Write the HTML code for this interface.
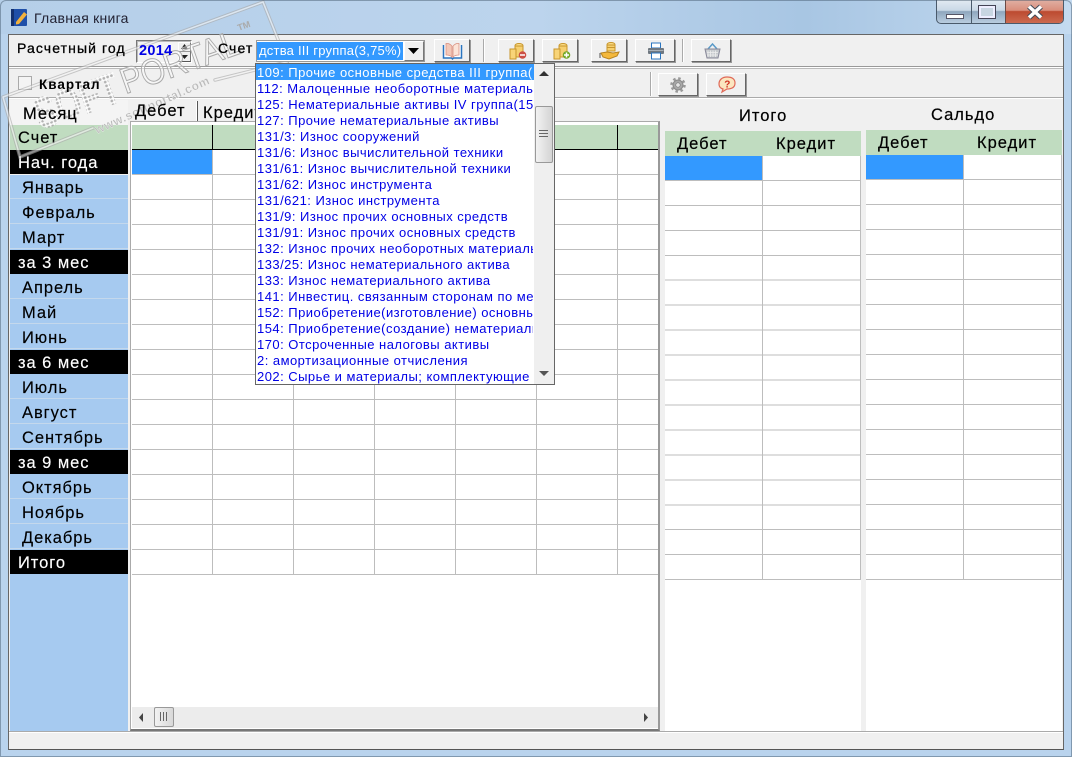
<!DOCTYPE html>
<html><head><meta charset="utf-8"><style>
html,body{margin:0;padding:0}
body{width:1072px;height:757px;overflow:hidden;position:relative;font-family:"Liberation Sans",sans-serif;background:#b9d3ed;color:#000}
.a{position:absolute;box-sizing:border-box}
.t{position:absolute;z-index:5;white-space:nowrap;font-size:16.5px;letter-spacing:1px;line-height:18px;-webkit-text-stroke:.2px #000}
.btn{position:absolute;top:39px;height:23px;box-sizing:border-box;background:#f0f0f0;border:1px solid;border-color:#fff #666 #666 #fff;box-shadow:1px 1px 0 #999}
.sep{position:absolute;width:1px;background:#aaa;box-shadow:1px 0 0 #fff}
.m{position:absolute;left:10px;width:118px;height:24px;font-size:16.5px;letter-spacing:.95px;line-height:27px;padding-left:12px;box-sizing:border-box;background:#a6caf0;border-bottom:1px solid #c4d8ec;white-space:nowrap;-webkit-text-stroke:.15px}
.k{background:#000;color:#fff;padding-left:8px;border:0}
.l{position:absolute;left:257px;white-space:nowrap;font-size:13px;letter-spacing:.47px;line-height:17px;height:17px;color:#0000e6;width:276px;overflow:hidden}
svg{position:absolute;overflow:visible}
</style></head><body>
<div class="a" style="left:0;top:0;width:1072px;height:34px;background:linear-gradient(90deg,#b5cfe9,#bcd4ed 50%,#a8c6e3 75%,#c4daf0)"></div>
<svg style="left:11px;top:8px" width="18" height="19" viewBox="0 0 18 19"><rect x="0" y="1" width="16" height="17" rx="1" fill="#1f4fa8"/><rect x="0" y="1" width="3" height="17" fill="#13306e"/><path d="M5 14 L13 4 L16 6.500 L8 16 L5 16.500 Z" fill="#f2b13c"/></svg>
<div class="t" style="left:34px;top:9px;font-size:14px;letter-spacing:.25px;color:#223;-webkit-text-stroke:0">Главная книга</div>

<div class="a" style="left:936px;top:0;width:128px;height:24px;border:1px solid #4a5a6b;border-top:0;border-radius:0 0 5px 5px;background:linear-gradient(#e2eaf2 0,#c9d8e6 45%,#8ea6bd 50%,#b9cde0);overflow:hidden">
<div class="a" style="left:34px;top:0;width:1px;height:23px;background:#4a5a6b"></div>
<div class="a" style="left:68px;top:0;width:1px;height:23px;background:#6b4a45"></div>
<div class="a" style="left:69px;top:0;width:58px;height:23px;background:linear-gradient(#e0b0a4 0,#d98e7c 45%,#bc4a30 50%,#cc6a50)"></div>
<div class="a" style="left:9px;top:14px;width:18px;height:5px;background:#fff;border:1px solid #556"></div>
<div class="a" style="left:41px;top:5px;width:18px;height:14px;border:1px solid #445;background:#c8d6e2;box-shadow:inset 0 0 0 2px #eef"></div>
<svg style="left:88px;top:5px" width="20" height="14"><path d="M4 1.500 L16 12.500 M16 1.500 L4 12.500" stroke="#3d4a58" stroke-width="5.500"/><path d="M4 1.500 L16 12.500 M16 1.500 L4 12.500" stroke="#fff" stroke-width="3.500"/></svg>
</div>

<!-- client -->
<div class="a" style="left:8px;top:34px;width:1056px;height:716px;background:#f0f0f0;border:1px solid #666;border-bottom-color:#555"></div>
<div class="a" style="left:9px;top:66px;width:1054px;height:3px;border-top:1px solid #999;border-bottom:1px solid #bbb;background:#fff"></div>
<div class="a" style="left:9px;top:97px;width:1054px;height:2px;border-top:1px solid #aaa;background:#fff"></div>

<div class="t" style="left:17px;top:39px;font-size:14px;letter-spacing:1.1px;-webkit-text-stroke:.3px #000">Расчетный год</div>
<div class="a" style="left:136px;top:40px;width:56px;height:23px;border:1px solid;border-color:#777 #fff #fff #777;box-shadow:inset 1px 1px 0 #bbb;background:#f4f4f4"></div>
<div class="t" style="left:139px;top:42px;font-size:14.500px;letter-spacing:.3px;font-weight:bold;color:#0000e6;-webkit-text-stroke:0">2014</div>
<div class="a" style="left:178px;top:42px;width:13px;height:20px;border:1px solid;border-color:#fff #777 #555 #fff;background:#f0f0f0"></div>
<svg style="left:178px;top:41px" width="13" height="21"><path d="M6.500 3 L10 8 L3 8 Z M3 14 L10 14 L6.500 18 Z" fill="#222"/><path d="M1 10.500H12" stroke="#999"/></svg>
<div class="t" style="left:218px;top:39px;font-size:14px;letter-spacing:1.1px;-webkit-text-stroke:.3px #000">Счет</div>

<div class="btn" style="left:434px;width:36px"><svg style="left:7px;top:2px" width="21" height="18"><path d="M1.500 3V16H9.500L10.500 17L11.500 16H19.500V3" fill="#fff" stroke="#2a75c0" stroke-width="1.500"/><path d="M4 1.500C6 1 8 2 10 4V15C8 13 6 13 4 13Z" fill="#f3c8b8" stroke="#d99080" stroke-width=".8"/><path d="M17 1.500C15 1 13 2 11 4V15C13 13 15 13 17 13Z" fill="#fbe4d8" stroke="#d99080" stroke-width=".8"/></svg></div>
<div class="sep" style="left:483px;top:39px;height:23px"></div>
<div class="btn" style="left:498px;width:36px"><svg style="left:10px;top:3px" width="19" height="17"><ellipse cx="10" cy="2.500" rx="4" ry="2" fill="#fadc88" stroke="#c8962c"/><rect x="6" y="3" width="8" height="11" fill="#f6d070" stroke="#c8962c"/><rect x="1" y="6" width="6" height="10" fill="#f8d478" stroke="#c8962c"/><circle cx="13.500" cy="12" r="3.800" fill="#cc4f45"/><path d="M11 12H16" stroke="#fff" stroke-width="1.500"/></svg></div>
<div class="btn" style="left:542px;width:36px"><svg style="left:10px;top:3px" width="19" height="17"><ellipse cx="10" cy="2.500" rx="4" ry="2" fill="#fadc88" stroke="#c8962c"/><rect x="6" y="3" width="8" height="11" fill="#f6d070" stroke="#c8962c"/><rect x="1" y="6" width="6" height="10" fill="#f8d478" stroke="#c8962c"/><circle cx="13.500" cy="12" r="3.800" fill="#74a828"/><path d="M11 12H16M13.500 9.500V14.500" stroke="#fff" stroke-width="1.500"/></svg></div>
<div class="btn" style="left:591px;width:36px"><svg style="left:7px;top:2px" width="22" height="18"><ellipse cx="12" cy="2.500" rx="4" ry="2" fill="#fadc88" stroke="#c8962c"/><rect x="8" y="3" width="8" height="6" fill="#f6d070" stroke="#c8962c"/><path d="M8 5.500H16" stroke="#c8962c"/><path d="M2 11L8 10L14 11L20 10L18 14L10 17L4 15Z" fill="#f4b83c" stroke="#b88420"/><path d="M1 11V16" stroke="#555"/></svg></div>
<div class="btn" style="left:635px;width:40px"><svg style="left:11px;top:2px" width="18" height="18"><rect x="4.500" y="1" width="9" height="5" fill="#fff" stroke="#2a75c0"/><rect x="1" y="6" width="16" height="6" fill="#707880" rx="1"/><rect x="1.500" y="8" width="15" height="1" fill="#a8b0b8"/><rect x="4.500" y="11" width="9" height="6" fill="#fff" stroke="#2a75c0"/></svg></div>
<div class="sep" style="left:682px;top:39px;height:23px"></div>
<div class="btn" style="left:691px;width:40px"><svg style="left:12px;top:2px" width="17" height="18"><path d="M4 7 L8.500 2 L13 7" fill="none" stroke="#5a9ac8" stroke-width="1.500"/><path d="M1 7H16L14 16H3Z" fill="#c4c8cc" stroke="#889"/><path d="M4 8.500V15M6.500 8.500V15M9 8.500V15M11.500 8.500V15M3 10.500H14M3 13H14" stroke="#eee" stroke-width=".8"/></svg></div>

<div class="a" style="left:18px;top:76px;width:14px;height:14px;border:1px solid #aaa;background:#f4f4f4"></div>
<div class="t" style="left:39px;top:76px;font-size:13.500px;font-weight:bold;letter-spacing:1px;-webkit-text-stroke:0">Квартал</div>
<div class="sep" style="left:650px;top:72px;height:24px"></div>
<div class="btn" style="left:658px;top:73px;width:40px"><svg style="left:11px;top:3px" width="16" height="16"><circle cx="8" cy="8" r="5" fill="#a8a8a8" stroke="#888" stroke-width="1"/><circle cx="8" cy="8" r="6.500" fill="none" stroke="#999" stroke-width="2.500" stroke-dasharray="2.500 2.600"/><circle cx="8" cy="8" r="2.200" fill="#e4e4e4" stroke="#777" stroke-width=".6"/></svg></div>
<div class="btn" style="left:706px;top:73px;width:40px"><svg style="left:11px;top:2px" width="18" height="18"><path d="M9 1C4 1 1 4 1 8C1 11 3 12.500 5 13L4 16L9 13C14 13 17 11 17 7C17 3 14 1 9 1Z" fill="#fbe6c0" stroke="#e06a58" stroke-width="1.200"/><text x="6.200" y="11.500" font-size="10" font-weight="bold" fill="#d03020" font-family="Liberation Sans">?</text></svg></div>

<!-- left -->
<div class="a" style="left:10px;top:175px;width:118px;height:556px;background:#a6caf0"></div>
<div class="a" style="left:10px;top:100px;width:118px;height:25px;background:#f4f4f4"></div>
<div class="t" style="left:23px;top:105px">Месяц</div>
<div class="m" style="top:125px;height:25px;background:#c0dcc0;padding-left:8px;border:0">Счет</div>
<div class="m k" style="top:150px;height:24px">Нач. года</div>
<div class="m" style="top:175px">Январь</div>
<div class="m" style="top:200px">Февраль</div>
<div class="m" style="top:225px">Март</div>
<div class="m k" style="top:250px">за 3 мес</div>
<div class="m" style="top:275px">Апрель</div>
<div class="m" style="top:300px">Май</div>
<div class="m" style="top:325px">Июнь</div>
<div class="m k" style="top:350px">за 6 мес</div>
<div class="m" style="top:375px">Июль</div>
<div class="m" style="top:400px">Август</div>
<div class="m" style="top:425px">Сентябрь</div>
<div class="m k" style="top:450px">за 9 мес</div>
<div class="m" style="top:475px">Октябрь</div>
<div class="m" style="top:500px">Ноябрь</div>
<div class="m" style="top:525px">Декабрь</div>
<div class="m k" style="top:550px">Итого</div>

<!-- tabs -->
<div class="t" style="left:135px;top:102px">Дебет</div>
<div class="a" style="left:197px;top:101px;width:1px;height:21px;background:#555;box-shadow:-1px 0 0 #fff"></div>
<div class="t" style="left:203px;top:104px;width:52px;overflow:hidden">Кредит</div>

<!-- main grid -->
<div class="a" style="left:130px;top:121px;width:530px;height:610px;background:#fff;border:solid;border-width:1px 2px 2px 1px;border-color:#aaa #999 #777 #aaa"></div>
<div class="a" style="left:132px;top:125px;width:526px;height:25px;background:#c0dcc0;border-bottom:1px solid #000"></div>
<div class="a" style="left:212px;top:125px;width:1px;height:24px;background:#000"></div>
<div class="a" style="left:617px;top:125px;width:1px;height:24px;background:#000"></div>
<div class="a" style="left:132px;top:150px;width:526px;height:425px;background-image:repeating-linear-gradient(180deg,transparent 0,transparent 24px,#bdbdbd 24px,#bdbdbd 25px),repeating-linear-gradient(90deg,transparent 0,transparent 80px,#bdbdbd 80px,#bdbdbd 81px)"></div>
<div class="a" style="left:132px;top:150px;width:80px;height:24px;background:#3399ff"></div>
<!-- h scroll -->
<div class="a" style="left:132px;top:707px;width:526px;height:21px;background:#ececec"></div>
<svg style="left:138px;top:712px" width="8" height="11"><path d="M5 1V10L1 5.500Z" fill="#444"/></svg>
<svg style="left:642px;top:712px" width="8" height="11"><path d="M2 1V10L6 5.500Z" fill="#444"/></svg>
<div class="a" style="left:154px;top:707px;width:20px;height:20px;border:1px solid #999;border-radius:2px;background:linear-gradient(90deg,#f2f2f2,#d8d8d8)"></div>
<svg style="left:159px;top:712px" width="10" height="10"><path d="M1.500 0V9M4.500 0V9M7.500 0V9" stroke="#666"/></svg>

<!-- itogo -->
<div class="t" style="left:739px;top:107px">Итого</div>
<div class="a" style="left:665px;top:131px;width:196px;height:25px;background:#c0dcc0"></div>
<div class="t" style="left:677px;top:135px">Дебет</div>
<div class="t" style="left:776px;top:135px">Кредит</div>
<div class="a" style="left:665px;top:156px;width:196px;height:575px;background:#fff"></div>
<div class="a" style="left:665px;top:156px;width:196px;height:424px;background-image:repeating-linear-gradient(180deg,transparent 0,transparent 23.950px,#bdbdbd 23.950px,#bdbdbd 24.950px),linear-gradient(90deg,transparent 97px,#bdbdbd 97px,#bdbdbd 98px,transparent 98px,transparent 195px,#bdbdbd 195px)"></div>
<div class="a" style="left:665px;top:156px;width:97px;height:24px;background:#3399ff"></div>

<!-- saldo -->
<div class="t" style="left:931px;top:106px">Сальдо</div>
<div class="a" style="left:866px;top:130px;width:196px;height:25px;background:#c0dcc0"></div>
<div class="t" style="left:878px;top:134px">Дебет</div>
<div class="t" style="left:977px;top:134px">Кредит</div>
<div class="a" style="left:866px;top:155px;width:196px;height:576px;background:#fff"></div>
<div class="a" style="left:866px;top:155px;width:196px;height:425px;background-image:repeating-linear-gradient(180deg,transparent 0,transparent 24px,#bdbdbd 24px,#bdbdbd 25px),linear-gradient(90deg,transparent 97px,#bdbdbd 97px,#bdbdbd 98px,transparent 98px,transparent 195px,#bdbdbd 195px)"></div>
<div class="a" style="left:866px;top:155px;width:97px;height:24px;background:#3399ff"></div>

<div class="a" style="left:9px;top:731px;width:1054px;height:2px;background:#aaa;border-bottom:1px solid #fff"></div>

<!-- watermark -->
<svg style="left:0;top:0" width="300" height="170">
<defs><pattern id="dots" width="4" height="4" patternUnits="userSpaceOnUse"><rect width="4" height="4" fill="#fff"/><circle cx="2" cy="2" r="1.400" fill="#a8a8a8"/></pattern></defs>
<g fill="none" stroke-linecap="round" opacity=".6">
<path d="M3 97L263 2L287 62L215 80M93 128L20 157L3 97" stroke="#aaa" stroke-width="3.500"/>
<path d="M3 97L263 2L287 62L215 80M93 128L20 157L3 97" stroke="#f4f4f4" stroke-width="1.500"/>
</g>
<g transform="translate(3 99) rotate(-19.400)">
<text x="25" y="42" font-family="Liberation Sans" font-size="45" font-weight="bold" fill="url(#dots)" textLength="88" lengthAdjust="spacingAndGlyphs" opacity=".85">SOFT</text>
<text x="117" y="36" font-family="Liberation Sans" font-size="36" fill="#fff" fill-opacity=".4" stroke="#aaa" stroke-width="1" textLength="124" lengthAdjust="spacingAndGlyphs">PORTAL</text>
<text x="245" y="14" font-family="Liberation Sans" font-size="9" font-weight="bold" fill="#aaa">TM</text>
</g>
<text transform="translate(97 134) rotate(-24)" font-family="Liberation Sans" font-size="12" font-weight="bold" fill="#bbb" stroke="#fff" stroke-width=".2" textLength="124">www.softportal.com</text>
</svg>

<!-- combobox -->
<div class="a" style="left:256px;top:40px;width:169px;height:22px;background:#fff;border:1px solid #999"></div>
<div class="a" style="left:257px;top:42px;width:146px;height:18px;background:#3399ff;color:#fff;font-size:13px;letter-spacing:.22px;line-height:18px;padding-left:2px;white-space:nowrap;overflow:hidden">дства III группа(3,75%)</div>
<div class="a" style="left:404px;top:41px;width:20px;height:20px;background:#f0f0f0;border:1px solid;border-color:#fff #777 #777 #fff"></div>
<svg style="left:408px;top:48px" width="12" height="7"><path d="M0 0H11L5.500 6Z" fill="#000"/></svg>

<!-- dropdown -->
<div class="a" style="left:255px;top:63px;width:300px;height:322px;background:#fff;border:1px solid #666"></div>
<div class="a" style="left:256px;top:64px;width:278px;height:16px;background:#3399ff"></div>
<div class="l" style="top:64px;height:16px;color:#fff">109: Прочие основные средства III группа(3,75%)</div>
<div class="l" style="top:80px">112: Малоценные необоротные материальные активы</div>
<div class="l" style="top:96px">125: Нематериальные активы IV группа(15%)</div>
<div class="l" style="top:112px">127: Прочие нематериальные активы</div>
<div class="l" style="top:128px">131/3: Износ сооружений</div>
<div class="l" style="top:144px">131/6: Износ вычислительной техники</div>
<div class="l" style="top:160px">131/61: Износ вычислительной техники</div>
<div class="l" style="top:176px">131/62: Износ инструмента</div>
<div class="l" style="top:192px">131/621: Износ инструмента</div>
<div class="l" style="top:208px">131/9: Износ прочих основных средств</div>
<div class="l" style="top:224px">131/91: Износ прочих основных средств</div>
<div class="l" style="top:240px">132: Износ прочих необоротных материальных</div>
<div class="l" style="top:256px">133/25: Износ нематериального актива</div>
<div class="l" style="top:272px">133: Износ нематериального актива</div>
<div class="l" style="top:288px">141: Инвестиц. связанным сторонам по методу</div>
<div class="l" style="top:304px">152: Приобретение(изготовление) основных</div>
<div class="l" style="top:320px">154: Приобретение(создание) нематериальных</div>
<div class="l" style="top:336px">170: Отсроченные налоговы активы</div>
<div class="l" style="top:352px">2: амортизационные отчисления</div>
<div class="l" style="top:368px;height:16px">202: Сырье и материалы; комплектующие изделия</div>
<div class="a" style="left:534px;top:64px;width:20px;height:320px;background:#efefef"></div>
<svg style="left:538px;top:70px" width="12" height="7"><path d="M1 6H11L6 1Z" fill="#333"/></svg>
<svg style="left:538px;top:370px" width="12" height="7"><path d="M1 1H11L6 6Z" fill="#555"/></svg>
<div class="a" style="left:535px;top:106px;width:18px;height:57px;border:1px solid #999;border-radius:2px;background:linear-gradient(90deg,#f2f2f2,#d4d4d4)"></div>
<svg style="left:539px;top:129px" width="10" height="10"><path d="M0 1.500H9M0 4.500H9M0 7.500H9" stroke="#666"/></svg>

<div class="a" style="left:0;top:0;width:1072px;height:757px;border:1px solid rgba(60,80,100,.45);border-radius:6px 6px 0 0;pointer-events:none"></div>
</body></html>
